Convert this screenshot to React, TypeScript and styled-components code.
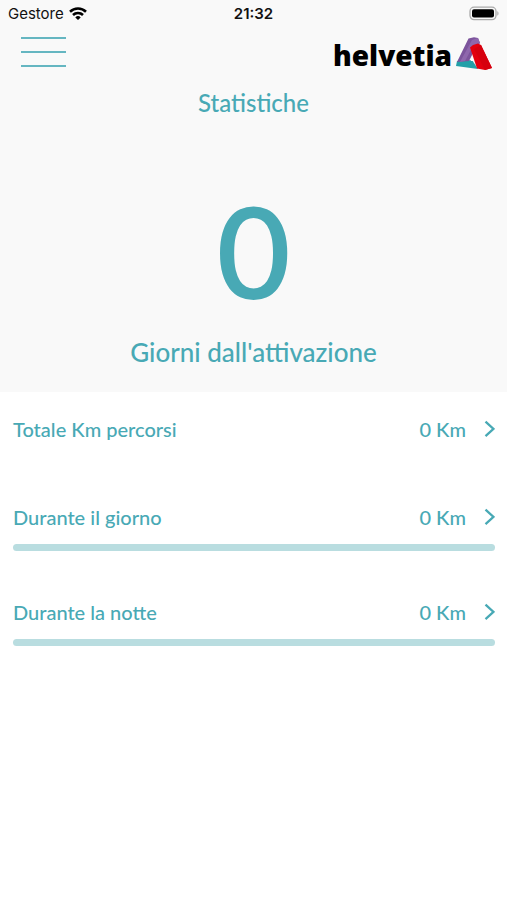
import React from "react";
import styled, { createGlobalStyle } from "styled-components";

type Stat = {
  label: string;
  km: number;
  progress?: number;
};

const stats: Stat[] = [
  { label: "Totale Km percorsi", km: 0 },
  { label: "Durante il giorno", km: 0, progress: 0 },
  { label: "Durante la notte", km: 0, progress: 0 },
];

const GlobalStyle = createGlobalStyle`
  * {
    box-sizing: border-box;
  }
  body {
    margin: 0;
    background: #fff;
    color: #48a9b5;
    font-family: Lato, "Liberation Sans", sans-serif;
  }
`;

const Hero = styled.header`
  padding-bottom: 24px;
  background: #f9f9f9;
`;

const StatusBar = styled.div`
  display: grid;
  grid-template-columns: 1fr auto 1fr;
  align-items: center;
  height: 28px;
  padding: 0 8px;
  color: #111;
  font-family: Inter, sans-serif;
  font-size: 15px;
  line-height: 20px;
`;

const Carrier = styled.div`
  display: flex;
  align-items: center;
  gap: 5px;
`;

const Time = styled.time`
  font-weight: 600;
`;

const Battery = styled.svg`
  justify-self: end;
`;

const TopBar = styled.div`
  display: flex;
  align-items: center;
  justify-content: space-between;
  height: 52px;
  padding: 0 15px 0 21px;
`;

const MenuButton = styled.button`
  display: flex;
  flex-direction: column;
  justify-content: space-between;
  width: 45px;
  height: 30px;
  margin-bottom: 4px;
  padding: 0;
  border: none;
  background: none;
  cursor: pointer;
`;

const MenuLine = styled.span`
  width: 100%;
  height: 2px;
  background: #65b6c1;
`;

const Logo = styled.div`
  display: flex;
  align-items: flex-end;
  gap: 4px;
  color: #000;
  font-family: "Open Sans", Lato, sans-serif;
  font-size: 28px;
  font-weight: 800;
  line-height: 32px;
`;

const Title = styled.h1`
  margin: 7px 0 0;
  font-size: 24px;
  font-weight: 500;
  line-height: 32px;
  text-align: center;
`;

const Days = styled.div`
  margin-top: 51px;
  font-size: 128px;
  font-weight: 600;
  line-height: 160px;
  text-align: center;
`;

const DaysLabel = styled.p`
  margin: 6px 0 0;
  font-size: 26px;
  font-weight: 500;
  line-height: 32px;
  text-align: center;
`;

const StatList = styled.main`
  display: flex;
  flex-direction: column;
  gap: 47px;
  padding: 23px 12px 24px 13px;
`;

const StatItem = styled.section`
  display: flex;
  flex-direction: column;
  gap: 13px;
  min-height: 41px;
`;

const StatButton = styled.button`
  display: flex;
  align-items: center;
  width: 100%;
  height: 28px;
  padding: 0;
  border: none;
  background: none;
  color: inherit;
  font: inherit;
  font-size: 20px;
  font-weight: 500;
  line-height: 28px;
  text-align: left;
  cursor: pointer;
`;

const StatLabel = styled.span`
  flex: 1;
`;

const StatValue = styled.span`
  margin-right: 18px;
`;

const Track = styled.div`
  height: 7px;
  border-radius: 4px;
  background: #b9dde0;
  overflow: hidden;
`;

const Fill = styled.div`
  height: 100%;
  background: #48a9b5;
`;

const WifiIcon = () => (
  <svg width="18" height="14" viewBox="0 0 18 14" fill="none" stroke="#000" strokeWidth="2.6">
    <path d="M1 4.7a11.5 11.5 0 0 1 16 0" />
    <path d="M4 8a7.2 7.2 0 0 1 10 0" />
    <path d="M9 13.1 6.3 10.4a3.9 3.9 0 0 1 5.4 0z" fill="#000" stroke="none" />
  </svg>
);

const BatteryIcon = () => (
  <Battery width="30" height="16" viewBox="0 0 30 16">
    <rect x="1" y="1.2" width="26" height="12.4" rx="4" fill="#f9f9f9" stroke="#aaa" strokeWidth="1.3" />
    <rect x="3" y="3.2" width="22" height="8.4" rx="2" fill="#000" />
    <path d="M28.3 5.3c1.6.6 1.6 3.8 0 4.4z" fill="#aaa" />
  </Battery>
);

const LogoMark = () => (
  <svg width="36" height="34" viewBox="0 0 36 34">
    <path d="M1 24 16 23 22 32 0 29z" fill="#23a0a8" />
    <path d="M12.5 1.5 18 .2 22 1 24 6 18 14 13 24 1 25z" fill="#7c549c" />
    <path d="M16 3 22 1 24 6 17 9 9 24 4 25z" fill="#8f67ad" />
    <path d="M16.5 20 19 24 14.5 24z" fill="#fff" />
    <path d="M14 10.5 17 8 22 6.5 25 8 36 31 29 33 21 31.5z" fill="#e3000f" />
    <path d="M25 8 36 31 29 33 18 12z" fill="#d6000e" />
  </svg>
);

const Chevron = () => (
  <svg width="11" height="18" viewBox="0 0 11 18" fill="none" stroke="#48a9b5" strokeWidth="2.3">
    <path d="m1.5 1.7 8 7.2-8 7.2" />
  </svg>
);

const App: React.FC = () => (
  <>
    <GlobalStyle />
    <Hero>
      <StatusBar>
        <Carrier>
          Gestore
          <WifiIcon />
        </Carrier>
        <Time>21:32</Time>
        <BatteryIcon />
      </StatusBar>
      <TopBar>
        <MenuButton aria-label="Menu">
          <MenuLine />
          <MenuLine />
          <MenuLine />
        </MenuButton>
        <Logo>
          helvetia
          <LogoMark />
        </Logo>
      </TopBar>
      <Title>Statistiche</Title>
      <Days>0</Days>
      <DaysLabel>Giorni dall'attivazione</DaysLabel>
    </Hero>
    <StatList>
      {stats.map(({ label, km, progress }) => (
        <StatItem key={label}>
          <StatButton>
            <StatLabel>{label}</StatLabel>
            <StatValue>{km} Km</StatValue>
            <Chevron />
          </StatButton>
          {progress !== undefined && (
            <Track role="progressbar" aria-label={label} aria-valuenow={progress}>
              <Fill style={{ width: `${progress}%` }} />
            </Track>
          )}
        </StatItem>
      ))}
    </StatList>
  </>
);

export default App;
